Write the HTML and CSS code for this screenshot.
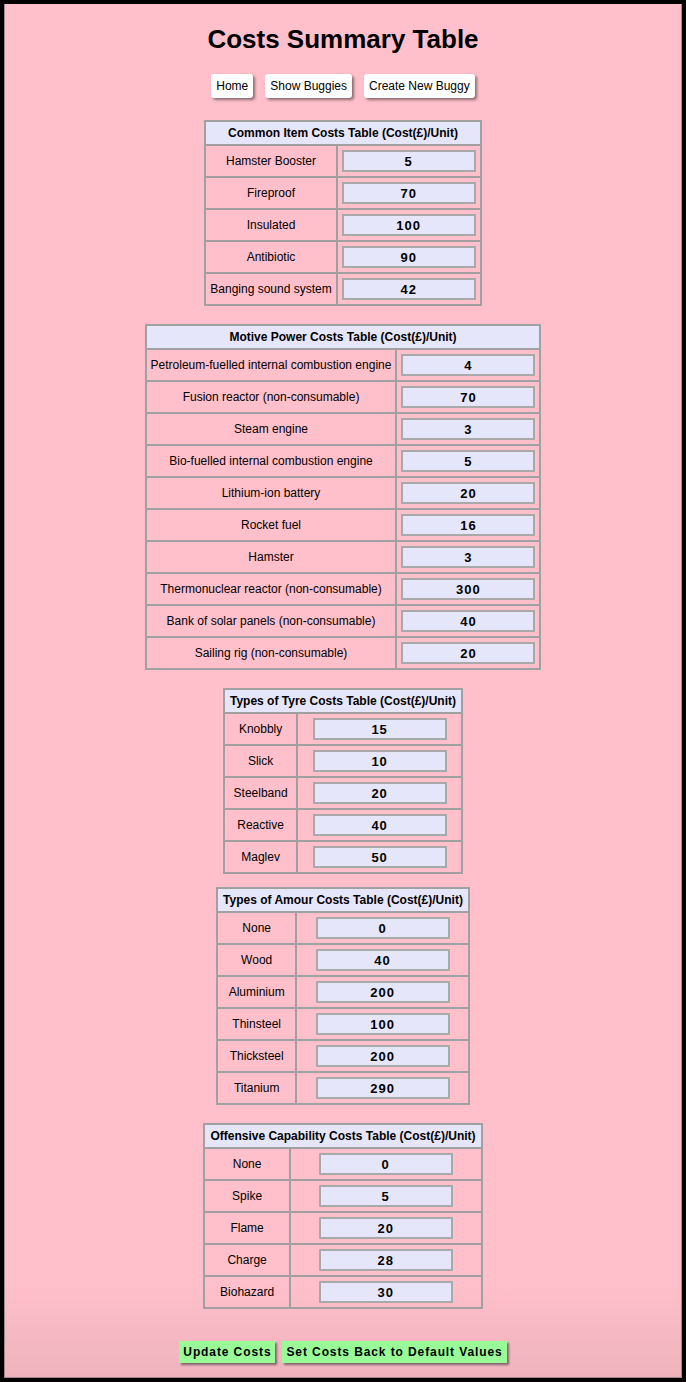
FILE: index.html
```html
<!DOCTYPE html>
<html lang="en">
<head>
<meta charset="utf-8">
<title>Costs Summary Table</title>
<link rel="stylesheet" href="styles.css">
</head>
<body>
<div class="page">
  <h1 class="title">Costs Summary Table</h1>
  <nav class="nav">
    <button class="nav-btn">Home</button>
    <button class="nav-btn">Show Buggies</button>
    <button class="nav-btn">Create New Buggy</button>
  </nav>

  <form class="costs">
    <table class="cost-table">
      <tr><th colspan="2">Common Item Costs Table (Cost(£)/Unit)</th></tr>
      <tr><td>Hamster Booster</td><td><input class="cost" value="5"></td></tr>
      <tr><td>Fireproof</td><td><input class="cost" value="70"></td></tr>
      <tr><td>Insulated</td><td><input class="cost" value="100"></td></tr>
      <tr><td>Antibiotic</td><td><input class="cost" value="90"></td></tr>
      <tr><td>Banging sound system</td><td><input class="cost" value="42"></td></tr>
    </table>

    <table class="cost-table">
      <tr><th colspan="2">Motive Power Costs Table (Cost(£)/Unit)</th></tr>
      <tr><td>Petroleum-fuelled internal combustion engine</td><td><input class="cost" value="4"></td></tr>
      <tr><td>Fusion reactor (non-consumable)</td><td><input class="cost" value="70"></td></tr>
      <tr><td>Steam engine</td><td><input class="cost" value="3"></td></tr>
      <tr><td>Bio-fuelled internal combustion engine</td><td><input class="cost" value="5"></td></tr>
      <tr><td>Lithium-ion battery</td><td><input class="cost" value="20"></td></tr>
      <tr><td>Rocket fuel</td><td><input class="cost" value="16"></td></tr>
      <tr><td>Hamster</td><td><input class="cost" value="3"></td></tr>
      <tr><td>Thermonuclear reactor (non-consumable)</td><td><input class="cost" value="300"></td></tr>
      <tr><td>Bank of solar panels (non-consumable)</td><td><input class="cost" value="40"></td></tr>
      <tr><td>Sailing rig (non-consumable)</td><td><input class="cost" value="20"></td></tr>
    </table>

    <table class="cost-table">
      <tr><th colspan="2">Types of Tyre Costs Table (Cost(£)/Unit)</th></tr>
      <tr><td>Knobbly</td><td><input class="cost" value="15"></td></tr>
      <tr><td>Slick</td><td><input class="cost" value="10"></td></tr>
      <tr><td>Steelband</td><td><input class="cost" value="20"></td></tr>
      <tr><td>Reactive</td><td><input class="cost" value="40"></td></tr>
      <tr><td>Maglev</td><td><input class="cost" value="50"></td></tr>
    </table>

    <table class="cost-table cost-table-tight">
      <tr><th colspan="2">Types of Amour Costs Table (Cost(£)/Unit)</th></tr>
      <tr><td>None</td><td><input class="cost" value="0"></td></tr>
      <tr><td>Wood</td><td><input class="cost" value="40"></td></tr>
      <tr><td>Aluminium</td><td><input class="cost" value="200"></td></tr>
      <tr><td>Thinsteel</td><td><input class="cost" value="100"></td></tr>
      <tr><td>Thicksteel</td><td><input class="cost" value="200"></td></tr>
      <tr><td>Titanium</td><td><input class="cost" value="290"></td></tr>
    </table>

    <table class="cost-table">
      <tr><th colspan="2">Offensive Capability Costs Table (Cost(£)/Unit)</th></tr>
      <tr><td>None</td><td><input class="cost" value="0"></td></tr>
      <tr><td>Spike</td><td><input class="cost" value="5"></td></tr>
      <tr><td>Flame</td><td><input class="cost" value="20"></td></tr>
      <tr><td>Charge</td><td><input class="cost" value="28"></td></tr>
      <tr><td>Biohazard</td><td><input class="cost" value="30"></td></tr>
    </table>

    <div class="actions">
      <button type="button" class="action-btn">Update Costs</button>
      <button type="button" class="action-btn">Set Costs Back to Default Values</button>
    </div>
  </form>
</div>
</body>
</html>
```

FILE: styles.css
```css
html, body {
  margin: 0;
  padding: 0;
}

body {
  background: #000;
  padding: 4px;
  font-family: "Liberation Sans", Arial, Helvetica, sans-serif;
  color: #000;
}

.page {
  box-sizing: border-box;
  height: 1374px;
  border: 1px solid #9a8a8e;
  border-top: none;
  background: linear-gradient(to bottom, #ffc0cb calc(100% - 95px), #eeb3bd 100%);
  display: flex;
  flex-direction: column;
  align-items: center;
  padding-top: 20px;
}

.title {
  margin: 0;
  font-size: 26px;
  line-height: 30px;
  font-weight: bold;
}

.nav {
  margin-top: 20px;
  display: flex;
  gap: 12px;
}

.nav-btn {
  height: 24px;
  padding: 0 5px;
  border: none;
  border-radius: 3px;
  background: #fff;
  font-family: "Liberation Sans", Arial, sans-serif;
  font-size: 12px;
  color: #000;
  box-shadow: 2px 2px 3px rgba(0, 0, 0, 0.45);
}

.costs {
  margin-top: 22px;
  display: flex;
  flex-direction: column;
  align-items: center;
  gap: 18px;
}

.cost-table {
  border-collapse: collapse;
  border: 2px solid #a0a0a0;
}

.cost-table-tight {
  margin-top: -5px;
}

.cost-table th {
  height: 22px;
  padding: 0 5px;
  background: #e6e6fa;
  border: 2px solid #a0a0a0;
  font-size: 12px;
  font-weight: bold;
  white-space: nowrap;
}

.cost-table td {
  height: 30px;
  padding: 0 4px;
  border: 2px solid #a0a0a0;
  font-size: 12px;
  text-align: center;
  white-space: nowrap;
}

.cost {
  box-sizing: border-box;
  display: block;
  margin: 0 auto;
  width: 134px;
  height: 22px;
  border: 2px solid #a9a9a9;
  background: #e6e6fa;
  font-family: "Liberation Sans", Arial, sans-serif;
  font-size: 13px;
  font-weight: bold;
  letter-spacing: 1px;
  text-align: center;
  color: #000;
  padding: 0;
}

.actions {
  margin-top: 14px;
  display: flex;
  gap: 7px;
}

.action-btn {
  height: 22px;
  padding: 0 4px;
  border: none;
  background: #98fb98;
  font-family: "Liberation Sans", Arial, sans-serif;
  font-size: 12px;
  font-weight: bold;
  letter-spacing: 0.9px;
  color: #000;
  box-shadow: 2px 2px 2px rgba(0, 0, 0, 0.45);
}
```
